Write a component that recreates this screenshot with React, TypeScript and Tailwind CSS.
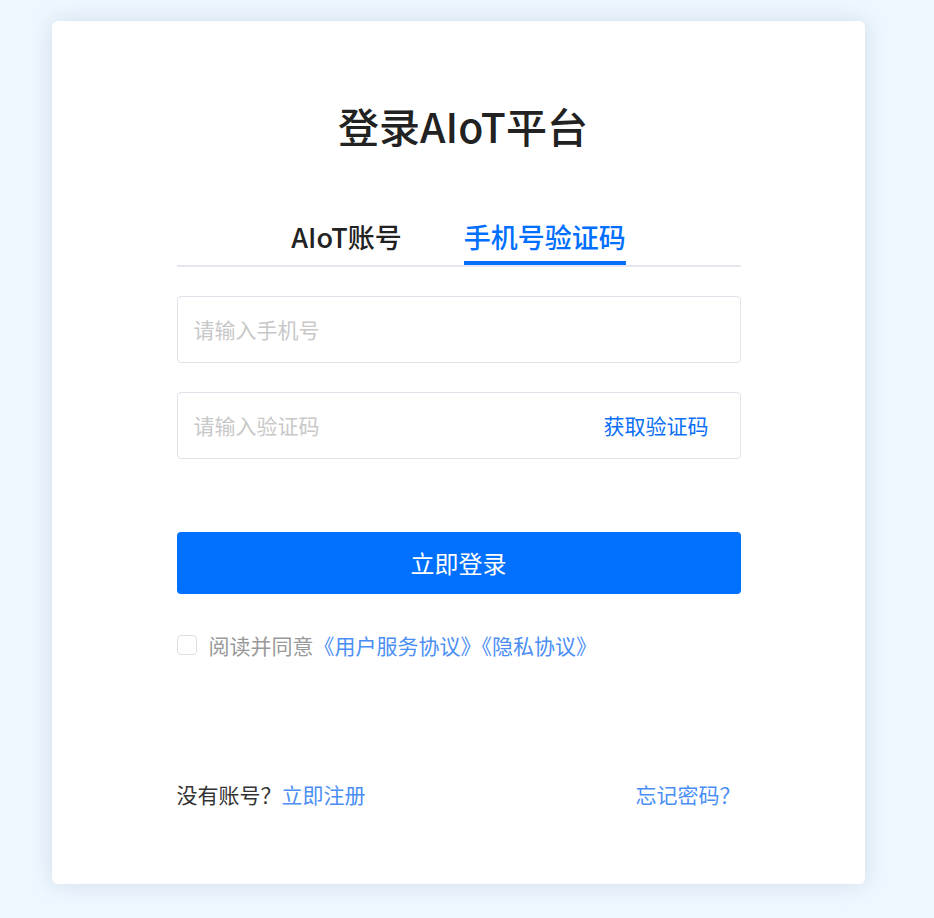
import React, { useState } from 'react';

const font = { fontFamily: '"Noto Sans CJK SC", "Noto Sans", sans-serif' };

export default function App() {
    const [tab, setTab] = useState<'account' | 'phone'>('phone');
    const [agree, setAgree] = useState(false);

    return (
        <div className="min-h-[918px] bg-[#eef7fe] pt-[21px] pb-[34px]" style={font}>
            <div className="ml-[52px] w-[813px] h-[863px] bg-white rounded-[6px] shadow-[0_0_22px_rgba(170,190,215,0.45)]">
                <div className="w-[564px] mx-auto pt-[76px]">
                    <h1 className="text-center pl-[9px] text-[41px] leading-[56px] font-medium text-[#222]">登录AIoT平台</h1>

                    <div className="mt-[66px] flex justify-center gap-[62px] border-b-2 border-[#e4e7ed]">
                        <button
                            onClick={() => setTab('account')}
                            className={`text-[27px] leading-[36px] font-medium flex flex-col items-stretch ${tab === 'account' ? 'text-[#006fff]' : 'text-[#222]'}`}
                        >
                            <span>AIoT账号</span>
                            <span className={`mt-[6px] h-[4px] ${tab === 'account' ? 'bg-[#006fff]' : 'bg-transparent'}`} />
                        </button>
                        <button
                            onClick={() => setTab('phone')}
                            className={`text-[27px] leading-[36px] font-medium flex flex-col items-stretch ${tab === 'phone' ? 'text-[#006fff]' : 'text-[#222]'}`}
                        >
                            <span>手机号验证码</span>
                            <span className={`mt-[6px] h-[4px] ${tab === 'phone' ? 'bg-[#006fff]' : 'bg-transparent'}`} />
                        </button>
                    </div>

                    <div className="mt-[29px] h-[67px] border border-[#dfe3ea] rounded-[4px] flex items-center px-[16px]">
                        <input
                            className="flex-1 outline-none text-[21px] text-[#333] placeholder:text-[#c8c8c8]"
                            placeholder="请输入手机号"
                        />
                    </div>

                    <div className="mt-[29px] h-[67px] border border-[#dfe3ea] rounded-[4px] flex items-center pl-[16px] pr-[31px]">
                        <input
                            className="flex-1 outline-none text-[21px] text-[#333] placeholder:text-[#c8c8c8]"
                            placeholder="请输入验证码"
                        />
                        <button className="text-[21px] text-[#0a6ff5]">获取验证码</button>
                    </div>

                    <button className="mt-[73px] w-full h-[62px] rounded-[4px] bg-[#0070ff] text-white text-[24px]">立即登录</button>

                    <div className="mt-[37px] flex items-center gap-[12px] text-[21px] leading-[28px]">
                        <button
                            onClick={() => setAgree(!agree)}
                            className={`w-[20px] h-[20px] rounded-[4px] border ${agree ? 'bg-[#0070ff] border-[#0070ff]' : 'border-[#dcdfe6] bg-white'}`}
                        />
                        <span className="text-[#999]">
                            阅读并同意<span className="text-[#4a8ef5]">《用户服务协议》《隐私协议》</span>
                        </span>
                    </div>

                    <div className="mt-[121px] flex justify-between text-[21px] leading-[28px]">
                        <span className="text-[#333]">
                            没有账号？<span className="text-[#4a8ef5]">立即注册</span>
                        </span>
                        <span className="text-[#4a8ef5]">忘记密码？</span>
                    </div>
                </div>
            </div>
        </div>
    );
}
